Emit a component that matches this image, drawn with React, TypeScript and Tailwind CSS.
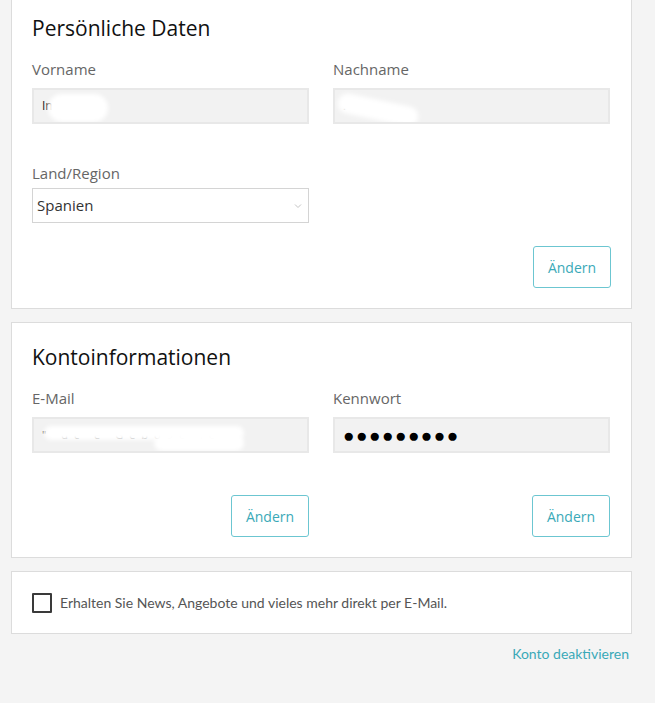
import { ReactNode } from "react";

function Field({ label, children }: { label: string; children: ReactNode }) {
  return (
    <div className="flex flex-col">
      <span className="text-[15px] leading-[20px] text-[#666] mb-[9px]">{label}</span>
      {children}
    </div>
  );
}

function Smudge({ className }: { className: string }) {
  return <div className={`absolute bg-white blur-[2px] rounded-full ${className}`} />;
}

function FilledInput({ children }: { children?: ReactNode }) {
  return (
    <div className="relative h-[36px] bg-[#f2f2f2] border-2 border-[#e8e8e8] flex items-center px-[8px] text-[15px] text-[#222] overflow-hidden">
      {children}
    </div>
  );
}

function ChangeButton() {
  return (
    <button className="w-[78px] h-[42px] border border-[#6cc6d1] rounded-[3px] bg-white text-[14px] text-[#3aa9b8]">
      Ändern
    </button>
  );
}

export default function App() {
  return (
    <div
      className="min-h-[703px] bg-[#f4f4f4] px-[11px] pb-10"
      style={{ fontFamily: '"Open Sans", "Noto Sans", sans-serif' }}
    >
      {/* Persönliche Daten */}
      <section className="w-[621px] bg-white border border-[#dcdcdc] border-t-0 px-[20px] pt-[13px] pb-[20px]">
        <h2 className="text-[21px] leading-[30px] text-[#111] mb-[16px]">Persönliche Daten</h2>
        <div className="grid grid-cols-[277px_277px] gap-x-[24px]">
          <Field label="Vorname">
            <FilledInput>
              <span className="text-[12px]">In</span>
              <Smudge className="left-[14px] top-[4px] w-[60px] h-[28px]" />
            </FilledInput>
          </Field>
          <Field label="Nachname">
            <FilledInput>
              <span className="text-[12px]">.</span>
              <Smudge className="left-[2px] top-[10px] w-[82px] h-[20px] rotate-[12deg]" />
            </FilledInput>
          </Field>
        </div>
        <div className="grid grid-cols-[277px_277px] gap-x-[24px] mt-[39px]">
          <div className="flex flex-col">
            <span className="text-[15px] leading-[20px] text-[#666] mb-[5px]">Land/Region</span>
            <div className="h-[35px] border border-[#d4d4d4] flex items-center justify-between px-[4px] text-[15px] text-[#333]">
              <span>Spanien</span>
              <svg width="8" height="6" viewBox="0 0 8 6" className="mr-[2px]">
                <path d="M1 1.5 L4 4.5 L7 1.5" fill="none" stroke="#c4c4c4" strokeWidth="1" />
              </svg>
            </div>
          </div>
        </div>
        <div className="flex justify-end mt-[23px]">
          <ChangeButton />
        </div>
      </section>

      {/* Kontoinformationen */}
      <section className="w-[621px] bg-white border border-[#dcdcdc] mt-[13px] px-[20px] pt-[19px] pb-[20px]">
        <h2 className="text-[21px] leading-[30px] text-[#111] mb-[16px]">Kontoinformationen</h2>
        <div className="grid grid-cols-[277px_277px] gap-x-[24px]">
          <Field label="E-Mail">
            <FilledInput>
              <span className="text-[11px] tracking-[6px] text-[#555]">" dc e Gebo9e .e</span>
              <Smudge className="left-[10px] top-[7px] w-[200px] h-[14px]" />
              <Smudge className="left-[120px] top-[16px] w-[90px] h-[16px]" />
            </FilledInput>
          </Field>
          <Field label="Kennwort">
            <FilledInput>
              <span className="text-[19px] tracking-[1.5px] text-black">●●●●●●●●●</span>
            </FilledInput>
          </Field>
        </div>
        <div className="grid grid-cols-[277px_277px] gap-x-[24px] mt-[42px]">
          <div className="flex justify-end">
            <ChangeButton />
          </div>
          <div className="flex justify-end">
            <ChangeButton />
          </div>
        </div>
      </section>

      {/* Newsletter */}
      <section className="w-[621px] h-[63px] bg-white border border-[#dcdcdc] mt-[13px] px-[20px] flex items-center">
        <label className="flex items-center gap-[8px]">
          <span className="w-[20px] h-[20px] border-2 border-[#3a3a3a] rounded-[1px] bg-white" />
          <span
            className="text-[14px] text-[#555]"
            style={{ fontFamily: 'Lato, "Noto Sans", sans-serif' }}
          >
            Erhalten Sie News, Angebote und vieles mehr direkt per E-Mail.
          </span>
        </label>
      </section>

      <div className="w-[621px] flex justify-end mt-[9px] pr-[3px]">
        <a
          className="text-[14px] text-[#3aa9b8]"
          style={{ fontFamily: 'Lato, "Noto Sans", sans-serif' }}
        >
          Konto deaktivieren
        </a>
      </div>
    </div>
  );
}
